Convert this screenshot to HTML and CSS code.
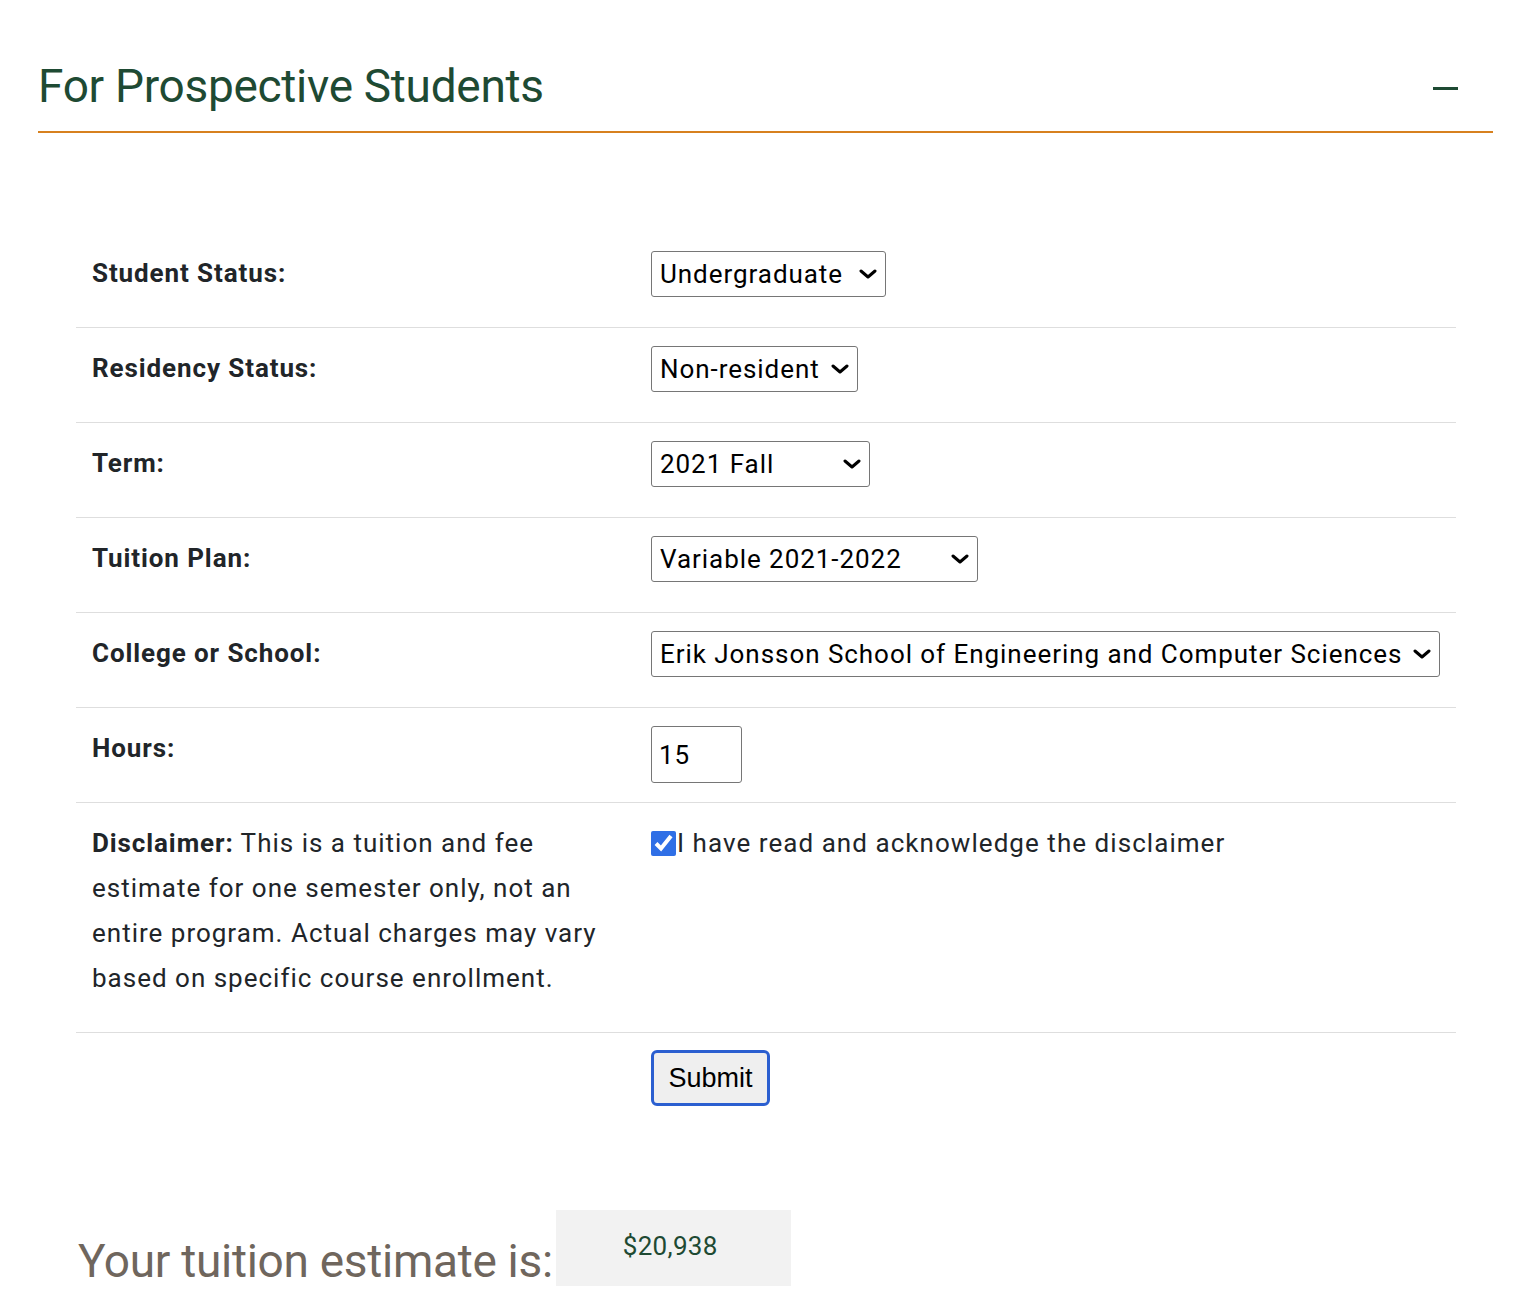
FILE: index.html
```html
<!DOCTYPE html>
<html lang="en">
<head>
<meta charset="utf-8">
<title>Tuition Estimator</title>
<link rel="stylesheet" href="styles.css">
</head>
<body>
<section class="panel">
  <div class="panel-head">
    <h2 class="panel-title">For Prospective Students</h2>
    <span class="toggle" aria-hidden="true"></span>
  </div>
  <form class="estimator">
    <table class="form-table">
      <tbody>
        <tr>
          <th class="label-cell"><p class="label">Student Status:</p></th>
          <td class="control-cell">
            <span class="select-wrap w-status">
              <select class="select"><option>Undergraduate</option></select>
              <svg class="chev" viewBox="0 0 18 10" aria-hidden="true"><path d="M2 2 L9 8 L16 2" fill="none" stroke="#000" stroke-width="3" stroke-linecap="round" stroke-linejoin="round"/></svg>
            </span>
          </td>
        </tr>
        <tr>
          <th class="label-cell"><p class="label">Residency Status:</p></th>
          <td class="control-cell">
            <span class="select-wrap w-res">
              <select class="select"><option>Non-resident</option></select>
              <svg class="chev" viewBox="0 0 18 10" aria-hidden="true"><path d="M2 2 L9 8 L16 2" fill="none" stroke="#000" stroke-width="3" stroke-linecap="round" stroke-linejoin="round"/></svg>
            </span>
          </td>
        </tr>
        <tr>
          <th class="label-cell"><p class="label">Term:</p></th>
          <td class="control-cell">
            <span class="select-wrap w-term">
              <select class="select"><option>2021 Fall</option></select>
              <svg class="chev" viewBox="0 0 18 10" aria-hidden="true"><path d="M2 2 L9 8 L16 2" fill="none" stroke="#000" stroke-width="3" stroke-linecap="round" stroke-linejoin="round"/></svg>
            </span>
          </td>
        </tr>
        <tr>
          <th class="label-cell"><p class="label">Tuition Plan:</p></th>
          <td class="control-cell">
            <span class="select-wrap w-plan">
              <select class="select"><option>Variable 2021-2022</option></select>
              <svg class="chev" viewBox="0 0 18 10" aria-hidden="true"><path d="M2 2 L9 8 L16 2" fill="none" stroke="#000" stroke-width="3" stroke-linecap="round" stroke-linejoin="round"/></svg>
            </span>
          </td>
        </tr>
        <tr>
          <th class="label-cell"><p class="label">College or School:</p></th>
          <td class="control-cell">
            <span class="select-wrap w-college">
              <select class="select"><option>Erik Jonsson School of Engineering and Computer Sciences</option></select>
              <svg class="chev" viewBox="0 0 18 10" aria-hidden="true"><path d="M2 2 L9 8 L16 2" fill="none" stroke="#000" stroke-width="3" stroke-linecap="round" stroke-linejoin="round"/></svg>
            </span>
          </td>
        </tr>
        <tr>
          <th class="label-cell"><p class="label">Hours:</p></th>
          <td class="control-cell">
            <input class="hours" type="text" value="15">
          </td>
        </tr>
        <tr>
          <th class="label-cell"><p class="label text"><strong>Disclaimer:</strong> This is a tuition and fee estimate for one semester only, not an entire program. Actual charges may vary based on specific course enrollment.</p></th>
          <td class="control-cell">
            <label class="ack"><input class="check" type="checkbox" checked><span>I have read and acknowledge the disclaimer</span></label>
          </td>
        </tr>
        <tr class="submit-row">
          <th class="label-cell"></th>
          <td class="control-cell"><button class="submit" type="button">Submit</button></td>
        </tr>
      </tbody>
    </table>
  </form>
  <div class="result">
    <span class="result-label">Your tuition estimate is:</span>
    <span class="result-value">$20,938</span>
  </div>
</section>
</body>
</html>
```
FILE: styles.css
```css
* { box-sizing: border-box; }
body {
  margin: 0;
  background: #fff;
  font-family: Roboto, "Liberation Sans", sans-serif;
  color: #212529;
}
.panel {
  padding: 0 43px 0 38px;
}
.panel-head {
  display: flex;
  align-items: center;
  justify-content: space-between;
  height: 133px;
  border-bottom: 2px solid #d7811f;
  padding-top: 40px;
}
.panel-title {
  margin: 0;
  font-weight: 400;
  font-size: 46px;
  color: #1e4a33;
  letter-spacing: -0.3px;
}
.toggle {
  width: 25px;
  height: 3px;
  background: #1e4a33;
  margin-right: 35px;
  margin-top: 6px;
}
.estimator {
  margin: 100px 37px 0 38px;
}
.form-table {
  width: 100%;
  border-collapse: collapse;
}
.form-table tr { border-bottom: 1px solid #dedede; }
.form-table tr.submit-row { border-bottom: none; }
.label-cell {
  width: 559px;
  text-align: left;
  vertical-align: top;
  padding: 18px 16px 16px;
  font-weight: 400;
}
.control-cell {
  vertical-align: top;
  padding: 18px 16px 16px;
}
.label {
  margin: 0 0 15px;
  font-size: 26px;
  line-height: 45px;
  font-weight: 700;
  letter-spacing: 0.9px;
}
.label.text { font-weight: 400; letter-spacing: 1px; }
.label.text strong { font-weight: 700; letter-spacing: 0.9px; }
.select-wrap {
  position: relative;
  display: inline-block;
  height: 46px;
}
.select {
  appearance: none;
  -webkit-appearance: none;
  width: 100%;
  height: 46px;
  border: 1px solid #767676;
  border-radius: 3px;
  background: #fff;
  padding: 0 30px 0 8px;
  font-family: Roboto, "Liberation Sans", sans-serif;
  font-size: 26px;
  color: #000;
  letter-spacing: 0.95px;
}
.chev {
  position: absolute;
  right: 9px;
  top: 18px;
  width: 18px;
  height: 10px;
  pointer-events: none;
}
.w-status { width: 235px; }
.w-res { width: 207px; }
.w-term { width: 219px; }
.w-plan { width: 327px; }
.w-college { width: 789px; }
.hours {
  width: 91px;
  height: 57px;
  border: 1px solid #767676;
  border-radius: 3px;
  padding: 0 7px;
  font-family: Roboto, "Liberation Sans", sans-serif;
  font-size: 26px;
  color: #000;
  letter-spacing: 0.8px;
}
.ack {
  display: flex;
  align-items: center;
  font-size: 26px;
  line-height: 45px;
  letter-spacing: 1.05px;
}
.check {
  width: 25px;
  height: 25px;
  margin: 0 1px 0 0;
  accent-color: #2f6fe6;
}
.submit-row .label-cell, .submit-row .control-cell { padding-top: 17px; }
.submit {
  width: 119px;
  height: 56px;
  border: 3px solid #2b5fd0;
  border-radius: 6px;
  background: #efefef;
  font-family: "Liberation Sans", Arial, sans-serif;
  font-size: 27px;
  color: #000;
  padding: 0;
}
.result {
  display: flex;
  align-items: flex-end;
  margin: 88px 0 0 40px;
}
.result-label {
  font-size: 46px;
  color: #6f665d;
  line-height: 46px;
  padding-bottom: 2px;
  letter-spacing: -0.3px;
}
.result-value {
  margin-left: 3px;
  width: 235px;
  height: 76px;
  background: #f2f2f2;
  color: #1e4a33;
  font-size: 26px;
  padding: 21px 0 0 67px;
  letter-spacing: 0.3px;
}
```
